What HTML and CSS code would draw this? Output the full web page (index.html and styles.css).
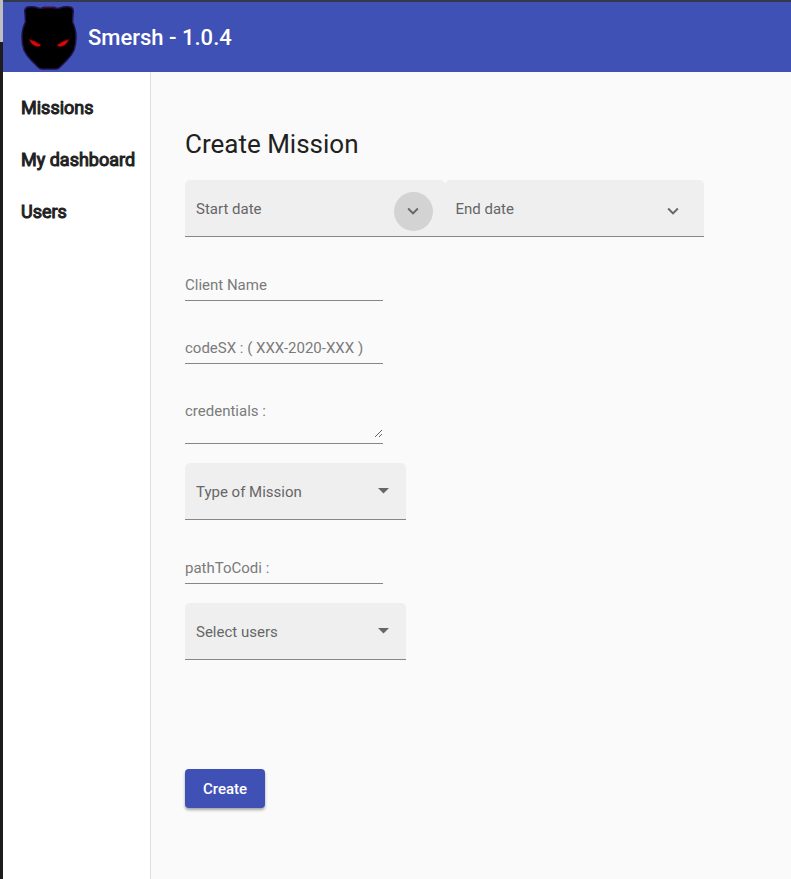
FILE: index.html
```html
<!DOCTYPE html>
<html lang="en">
<head>
<meta charset="utf-8">
<meta name="viewport" content="width=device-width, initial-scale=1">
<title>Smersh</title>
<link rel="stylesheet" href="styles.css">
</head>
<body>
<div class="edge" aria-hidden="true"></div>
<div class="app">
  <header class="toolbar">
    <svg class="logo" viewBox="0 0 60 66" aria-hidden="true">
      <path class="head" d="M9 2Q14 1 19 3Q22 4 25 2.500H35Q38 4 41 3Q46 1 51 2Q55 3 54 8L53.500 17Q57 24 57 32Q57 39 55 45Q53 50 48 55L41 62Q39 64 37 64H23Q21 64 19 62L12 55Q7 50 5 45Q3 39 3 32Q3 24 6.500 17L6 8Q5 3 9 2Z"/>
      <path class="crown" d="M24 2.500H36"/>
      <path class="eye" d="M10 34Q16 35.500 21.500 39.500Q22 42 18 41.800Q12 40.500 10 34Z"/>
      <path class="eye" d="M50 34Q44 35.500 38.500 39.500Q38 42 42 41.800Q48 40.500 50 34Z"/>
    </svg>
    <span class="brand">Smersh - 1.0.4</span>
  </header>
  <div class="body">
    <nav class="sidebar">
      <a href="#missions">Missions</a>
      <a href="#dashboard">My dashboard</a>
      <a href="#users">Users</a>
    </nav>
    <main class="content">
      <h1>Create Mission</h1>
      <form>
        <div class="dates">
          <div class="box-field date">
            <input type="text" placeholder="Start date" aria-label="Start date">
            <button class="toggle active" type="button" aria-label="Open start date calendar">
              <svg viewBox="0 0 24 24"><path d="M7.410 8.590 12 13.170l4.590-4.580L18 10l-6 6-6-6z"/></svg>
            </button>
          </div>
          <div class="box-field date">
            <input type="text" placeholder="End date" aria-label="End date">
            <button class="toggle" type="button" aria-label="Open end date calendar">
              <svg viewBox="0 0 24 24"><path d="M7.410 8.590 12 13.170l4.590-4.580L18 10l-6 6-6-6z"/></svg>
            </button>
          </div>
        </div>
        <div class="line-field after-box"><input type="text" placeholder="Client Name" aria-label="Client Name"></div>
        <div class="line-field"><input type="text" placeholder="codeSX : ( XXX-2020-XXX )" aria-label="codeSX"></div>
        <div class="line-field"><textarea placeholder="credentials :" aria-label="credentials"></textarea></div>
        <div class="box-field choice">
          <select aria-label="Type of Mission"><option>Type of Mission</option></select>
          <svg class="arrow" viewBox="0 0 11 6" aria-hidden="true"><path d="M0 0h11L5.500 5.500z"/></svg>
        </div>
        <div class="line-field after-box"><input type="text" placeholder="pathToCodi :" aria-label="pathToCodi"></div>
        <div class="box-field choice">
          <select aria-label="Select users"><option>Select users</option></select>
          <svg class="arrow" viewBox="0 0 11 6" aria-hidden="true"><path d="M0 0h11L5.500 5.500z"/></svg>
        </div>
        <button class="create" type="submit">Create</button>
      </form>
    </main>
  </div>
</div>
</body>
</html>
```

FILE: styles.css
```css
* { box-sizing: border-box; }

body {
  margin: 0;
  display: flex;
  min-height: 100vh;
  font-family: Roboto, "Liberation Sans", sans-serif;
  font-size: 15px;
  line-height: 20px;
  color: #212121;
  background: #fafafa;
}

.edge {
  width: 3px;
  background: linear-gradient(#bfbfbf 42px, #1c1c1c 42px);
}

.app {
  flex: 1;
  min-width: 0;
  display: flex;
  flex-direction: column;
  border-top: 2px solid #343a4e;
}

.toolbar {
  display: flex;
  align-items: center;
  gap: 9px;
  height: 70px;
  padding: 2px 16px 0;
  background: #3f51b5;
  color: #fff;
}

.logo { width: 60px; height: 66px; }
.head { fill: #000; stroke: #20124a; stroke-width: 1.5; }
.crown { fill: none; stroke: #4a0a3c; stroke-width: 1.5; }
.eye { fill: #d90808; stroke: #4a0000; stroke-width: 1; }

.brand {
  font-size: 22px;
  font-weight: 500;
  line-height: 28px;
}

.body { flex: 1; display: flex; }

.sidebar {
  flex: none;
  width: 148px;
  display: flex;
  flex-direction: column;
  gap: 28px;
  padding: 24px 0 0 18px;
  background: #fff;
  border-right: 1px solid #dedede;
}

.sidebar a {
  color: #212121;
  font-size: 18px;
  font-weight: 400;
  -webkit-text-stroke: 1px #212121;
  line-height: 24px;
  text-decoration: none;
  white-space: nowrap;
}

.content { flex: 1; min-width: 0; padding: 56px 34px 34px; }

h1 {
  margin: 0 0 20px;
  font-size: 26px;
  font-weight: 400;
  line-height: 32px;
}

.dates { display: flex; max-width: 519px; }

.box-field {
  display: flex;
  align-items: center;
  height: 57px;
  background: #efefef;
  border-bottom: 1px solid #868686;
  border-radius: 5px 5px 0 0;
}

.date { flex: 1; min-width: 0; padding: 2px 12px 0 11px; }

input, textarea, select {
  display: block;
  width: 100%;
  min-width: 0;
  margin: 0;
  padding: 0;
  border: 0;
  outline: 0;
  background: transparent;
  color: #666;
  font: inherit;
}

::placeholder { color: #7b7b7b; opacity: 1; }
.date ::placeholder { color: #666; }

.toggle {
  flex: none;
  display: grid;
  place-items: center;
  width: 39px;
  height: 39px;
  margin-top: 4px;
  padding: 0;
  border: 0;
  border-radius: 50%;
  background: transparent;
}

.toggle.active { background: #d3d3d3; }
.toggle svg { width: 22px; height: 22px; fill: #666; }

.line-field {
  width: 198px;
  margin-top: 37px;
  padding-bottom: 5px;
  border-bottom: 1px solid #868686;
}

.after-box { margin-top: 38px; }

.line-field input { height: 20px; }
textarea { height: 37px; resize: vertical; overflow: hidden; }

.choice {
  width: 221px;
  margin-top: 19px;
  padding: 0 17px 0 11px;
}

.choice select { height: 56px; padding-top: 2px; appearance: none; }
.arrow { flex: none; width: 11px; height: 6px; fill: #666; }

.create {
  display: block;
  min-width: 80px;
  height: 39px;
  margin-top: 109px;
  padding: 0 16px;
  border: 0;
  border-radius: 4px;
  background: #3f51b5;
  box-shadow: 0 2px 3px rgba(0, 0, 0, 0.35);
  color: #fff;
  font: 500 15px/20px Roboto, "Liberation Sans", sans-serif;
}
```
